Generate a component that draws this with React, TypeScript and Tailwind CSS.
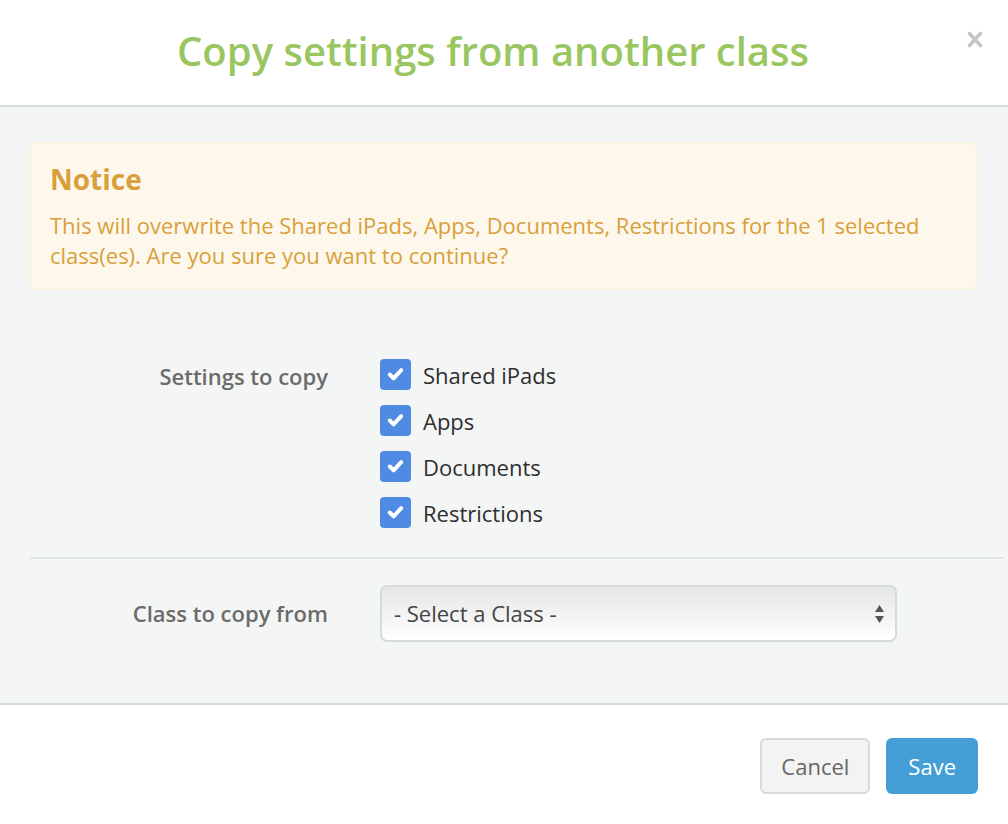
import { useState } from "react";

const settings = ["Shared iPads", "Apps", "Documents", "Restrictions"];

function CheckBox({ checked, onClick }: { checked: boolean; onClick: () => void }) {
  return (
    <button
      onClick={onClick}
      className={`w-[31px] h-[31px] rounded-[4px] flex items-center justify-center ${
        checked ? "bg-[#4f8be3]" : "bg-white border border-[#c8cfd1]"
      }`}
    >
      {checked && (
        <svg className="w-[19px] h-[19px]" viewBox="0 0 20 20" fill="none">
          <path d="M4 10l4 4 8-8.5" stroke="white" strokeWidth={4.2} strokeLinecap="round" strokeLinejoin="round" />
        </svg>
      )}
    </button>
  );
}

export default function App() {
  const [checked, setChecked] = useState<Record<string, boolean>>({
    "Shared iPads": true,
    Apps: true,
    Documents: true,
    Restrictions: true,
  });

  return (
    <div className="w-[1008px] h-[824px] bg-white flex flex-col font-['Open_Sans',sans-serif]">
      {/* Header */}
      <div className="relative h-[107px] border-b-2 border-[#d6dcdd] flex items-center justify-center pr-[22px]">
        <h1 className="text-[40px] text-[#9ac662] font-semibold pb-[4px]">Copy settings from another class</h1>
        <button className="absolute right-[25px] top-[31px]">
          <svg className="w-[16px] h-[17px]" viewBox="0 0 16 17">
            <path d="M2.5 2.5l11 12M13.5 2.5l-11 12" stroke="#c6c6c6" strokeWidth={3.6} strokeLinecap="round" />
          </svg>
        </button>
      </div>

      {/* Body */}
      <div className="bg-[#f4f6f5] flex-1 pt-[36px] pl-[30px] pr-[5px]">
        <div className="mr-[26px] bg-[#fef8ec] border border-[#fcf0d6] rounded-[6px] px-[19px] pt-[16px] pb-[18px] text-[#d8a03a]">
          <h2 className="text-[28px] font-bold leading-[38px] mb-[12px]">Notice</h2>
          <p className="text-[22px] leading-[30px]">
            This will overwrite the Shared iPads, Apps, Documents, Restrictions for the 1 selected class(es). Are you sure you want to continue?
          </p>
        </div>

        <div className="flex mt-[70px] pb-[29px]">
          <div className="w-[298px] text-right text-[22px] leading-[30px] font-semibold text-[#6b6b6b] pt-[2px]">
            Settings to copy
          </div>
          <div className="ml-[52px] flex flex-col gap-[15px]">
            {settings.map((s) => (
              <label key={s} className="flex items-center gap-[12px] cursor-pointer">
                <CheckBox checked={checked[s]} onClick={() => setChecked({ ...checked, [s]: !checked[s] })} />
                <span className="text-[22px] leading-[30px] text-[#2e2e2e]">{s}</span>
              </label>
            ))}
          </div>
        </div>

        <div className="border-t-2 border-[#e1e5e5]" />

        <div className="flex items-center mt-[26px]">
          <div className="w-[298px] text-right text-[22px] font-semibold text-[#6b6b6b]">Class to copy from</div>
          <div className="ml-[52px] relative w-[517px] h-[57px] rounded-[7px] border-2 border-[#d3dbdd] bg-gradient-to-b from-[#e6e6e6] to-[#ffffff] flex items-center px-[12px]">
            <span className="text-[22px] text-[#444444]">- Select a Class -</span>
            <svg className="absolute right-[10px] top-[17px] w-[11px] h-[20px]" viewBox="0 0 11 20">
              <path d="M5.5 1L10 8H1z" fill="#555" />
              <path d="M5.5 19L10 12H1z" fill="#555" />
            </svg>
          </div>
        </div>
      </div>

      {/* Footer */}
      <div className="h-[121px] border-t-2 border-[#d6dcdd] flex items-start justify-end gap-[16px] pt-[33px] pr-[30px]">
        <button className="h-[56px] px-[19px] rounded-[6px] bg-[#f3f3f3] border-2 border-[#d6dcdd] text-[22px] text-[#666666]">
          Cancel
        </button>
        <button className="h-[56px] px-[22px] rounded-[6px] bg-[#459fd6] text-[22px] text-white">Save</button>
      </div>
    </div>
  );
}
